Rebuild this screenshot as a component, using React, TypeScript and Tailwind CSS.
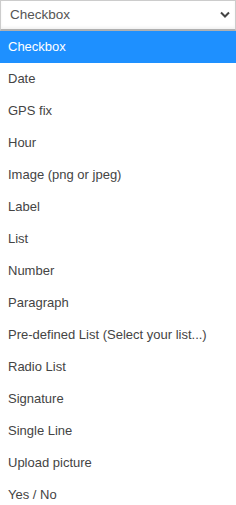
const options = [
  'Checkbox',
  'Date',
  'GPS fix',
  'Hour',
  'Image (png or jpeg)',
  'Label',
  'List',
  'Number',
  'Paragraph',
  'Pre-defined List (Select your list...)',
  'Radio List',
  'Signature',
  'Single Line',
  'Upload picture',
  'Yes / No',
];

export default function App() {
  const selected = 'Checkbox';
  return (
    <div className="w-[236px] h-[505px] bg-white overflow-hidden" style={{ fontFamily: '"Liberation Sans", Arial, sans-serif' }}>
      <div className="h-[31px] border border-[#cccccc] border-b-2 border-b-[#b0b0b0] bg-white flex items-center justify-between pl-[9px] pr-[5px] shadow-[inset_0_-2px_3px_rgba(0,0,0,0.05)]">
        <span className="text-[13.5px] text-[#555555]">{selected}</span>
        <svg width="10" height="8" viewBox="0 0 10 8" className="text-[#444]">
          <path d="M1 1.5 L5 5.5 L9 1.5" fill="none" stroke="currentColor" strokeWidth="2" />
        </svg>
      </div>
      <ul>
        {options.map((o) => (
          <li
            key={o}
            className={`h-[32px] flex items-center pl-[8px] text-[13px] ${
              o === selected ? 'bg-[#1e90ff] text-white' : 'text-[#444444]'
            }`}
          >
            {o}
          </li>
        ))}
      </ul>
    </div>
  );
}
